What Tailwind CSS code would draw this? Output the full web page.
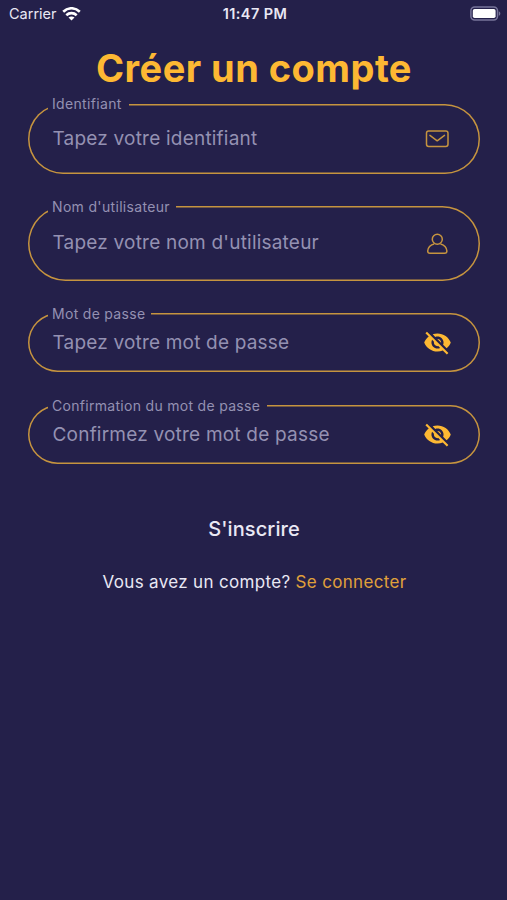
<!DOCTYPE html>
<html lang="fr">
<head>
    <meta charset="UTF-8">
    <meta name="viewport" content="width=device-width, initial-scale=1.0">
    <title>Créer un compte</title>
    <script src="https://cdn.jsdelivr.net/npm/@tailwindcss/browser@4"></script>
</head>
<body class="min-h-screen overflow-hidden bg-[#24204a] font-['Inter',sans-serif] text-[#e9e8f4]">
    <!-- Status bar -->
    <header class="grid h-7 grid-cols-3 items-center pl-[9px] pr-[6px]">
        <div class="flex items-center gap-[5px] text-[14.5px] leading-none">
            <span>Carrier</span>
            <svg class="h-[14px] w-[19px]" viewBox="0 0 19 14" fill="none" stroke="#fff" stroke-width="2.6">
                <path d="M1.200 4.700C6 .1 13 .1 17.800 4.700" />
                <path d="M4.300 8.200c3-2.800 7.400-2.800 10.400 0" />
                <path d="M9.500 13.400 6.500 10.600c1.700-1.500 4.300-1.500 6 0z" fill="#fff" stroke="none" />
            </svg>
        </div>
        <div class="text-center text-[14.5px] leading-none font-semibold tracking-[0.4px] whitespace-nowrap">11:47 PM</div>
        <svg class="-mt-[2px] h-[15px] w-[31px] justify-self-end" viewBox="0 0 31 15">
            <rect x=".9" y="1" width="26.6" height="13" rx="3.8" fill="none" stroke="#77749a" stroke-width="1.5" />
            <rect x="2.800" y="2.900" width="22.800" height="9.200" rx="1.800" fill="#fff" />
            <path d="M28.800 5.200c2 .8 2 3.800 0 4.600z" fill="#77749a" />
        </svg>
    </header>

    <main class="px-7">
        <h1 class="mt-[16px] h-[60px] pl-px text-center text-[38px] leading-[48px] font-bold tracking-[0.45px] whitespace-nowrap text-[#fdb833]">Créer un compte</h1>

        <form class="flex w-[452px] flex-col">
            <div class="relative flex h-[70px] items-center justify-between rounded-full pr-[31px] pl-[24.5px] shadow-[inset_0_0_0_1.5px_#c6943f]">
                <label class="absolute -top-[9px] left-5 bg-[#24204a] pr-[7px] pl-1 text-[14px] leading-[18px] tracking-[0.33px] whitespace-nowrap text-[#9491b2]">Identifiant</label>
                <span class="text-[19px] tracking-[0.21px] whitespace-nowrap text-[#9491b2]">Tapez votre identifiant</span>
                <svg class="h-6 w-6" viewBox="0 0 24 24" fill="none" stroke="#c6943f" stroke-width="1.5" stroke-linecap="round" stroke-linejoin="round">
                    <rect x="1.5" y="4" width="21.5" height="15.5" rx="2.2" />
                    <path d="m4.900 8.400 7.300 5.400 7.300-5.400" />
                </svg>
            </div>

            <div class="relative mt-[32px] flex h-[75px] items-center justify-between rounded-full pr-[31px] pl-[24.5px] shadow-[inset_0_0_0_1.5px_#c6943f]">
                <label class="absolute -top-[8px] left-5 bg-[#24204a] pr-[6px] pl-1 text-[14px] leading-[18px] tracking-[0.33px] whitespace-nowrap text-[#9491b2]">Nom d'utilisateur</label>
                <span class="text-[19px] tracking-[0.21px] whitespace-nowrap text-[#9491b2]">Tapez votre nom d'utilisateur</span>
                <svg class="h-6 w-6" viewBox="0 0 24 24" fill="none" stroke="#c6943f" stroke-width="1.5" stroke-linejoin="round">
                    <circle cx="12.3" cy="7.3" r="5" />
                    <path d="M9.200 11.900C5.500 12.400 2.700 15.700 2.700 19c0 1.500.9 2.300 2.300 2.300h14.600c1.400 0 2.300-.8 2.300-2.300 0-3.300-2.800-6.600-6.500-7.100" />
                </svg>
            </div>

            <div class="relative mt-[32px] flex h-[59px] items-center justify-between rounded-full pr-[29px] pl-[24.5px] shadow-[inset_0_0_0_1.5px_#c6943f]">
                <label class="absolute -top-[8px] left-5 bg-[#24204a] pr-[6px] pl-1 text-[14px] leading-[18px] tracking-[0.3px] whitespace-nowrap text-[#9491b2]">Mot de passe</label>
                <span class="mt-px text-[19px] tracking-[0.19px] whitespace-nowrap text-[#9491b2]">Tapez votre mot de passe</span>
                <svg class="-mr-[1px] h-[29px] w-[29px]" viewBox="0 0 24 24" fill="#fdb833">
                    <path d="M12 7c2.760 0 5 2.240 5 5 0 .65-.13 1.260-.36 1.830l2.920 2.920c1.510-1.260 2.700-2.890 3.430-4.750-1.730-4.390-6-7.500-11-7.500-1.400 0-2.740.25-3.980.7l2.160 2.160C10.740 7.130 11.350 7 12 7zM2 4.270l2.280 2.280.46.46C3.080 8.300 1.780 10.020 1 12c1.730 4.390 6 7.500 11 7.500 1.550 0 3.030-.3 4.380-.84l.42.42L19.730 22 21 20.730 3.270 3 2 4.270zM7.530 9.800l1.550 1.550c-.05.21-.08.43-.08.65 0 1.660 1.340 3 3 3 .22 0 .44-.03.65-.08l1.550 1.550c-.67.33-1.410.53-2.200.53-2.760 0-5-2.240-5-5 0-.79.2-1.530.53-2.200zm4.310-.78l3.150 3.150.02-.16c0-1.660-1.340-3-3-3l-.17.01z" />
                </svg>
            </div>

            <div class="relative mt-[33px] flex h-[59px] items-center justify-between rounded-full pr-[29px] pl-[24.5px] shadow-[inset_0_0_0_1.5px_#c6943f]">
                <label class="absolute -top-[8px] left-5 bg-[#24204a] pr-[7px] pl-1 text-[14px] leading-[18px] tracking-[0.3px] whitespace-nowrap text-[#9491b2]">Confirmation du mot de passe</label>
                <span class="mt-px text-[19px] tracking-[0.21px] whitespace-nowrap text-[#9491b2]">Confirmez votre mot de passe</span>
                <svg class="-mr-[1px] h-[29px] w-[29px]" viewBox="0 0 24 24" fill="#fdb833">
                    <path d="M12 7c2.760 0 5 2.240 5 5 0 .65-.13 1.260-.36 1.830l2.920 2.920c1.510-1.260 2.700-2.890 3.430-4.750-1.730-4.390-6-7.500-11-7.500-1.400 0-2.740.25-3.980.7l2.160 2.160C10.740 7.130 11.350 7 12 7zM2 4.270l2.280 2.280.46.46C3.080 8.300 1.780 10.020 1 12c1.730 4.390 6 7.500 11 7.500 1.550 0 3.030-.3 4.380-.84l.42.42L19.730 22 21 20.730 3.270 3 2 4.270zM7.530 9.800l1.550 1.550c-.05.21-.08.43-.08.65 0 1.660 1.340 3 3 3 .22 0 .44-.03.65-.08l1.550 1.550c-.67.33-1.410.53-2.200.53-2.760 0-5-2.240-5-5 0-.79.2-1.530.53-2.200zm4.310-.78l3.150 3.150.02-.16c0-1.660-1.340-3-3-3l-.17.01z" />
                </svg>
            </div>

            <button type="button" class="mt-[50px] h-[30px] text-[20px] leading-[30px] font-medium tracking-[0.1px]">S'inscrire</button>
        </form>

        <p class="mt-[26px] pl-[2px] text-center text-[17px] leading-[24px] tracking-[0.33px] whitespace-nowrap">
            Vous avez un compte? <a href="#" class="text-[#e0a03a]">Se connecter</a>
        </p>
    </main>
</body>
</html>
